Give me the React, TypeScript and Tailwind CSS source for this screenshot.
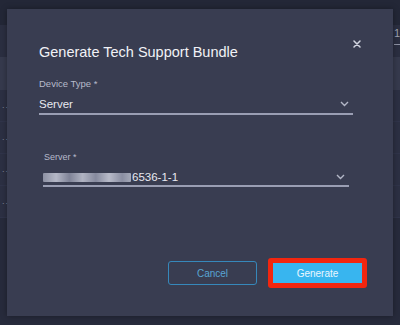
import React from "react";

const rows = [0, 1, 2, 3];

function Chevron() {
  return (
    <svg width="9" height="6" viewBox="0 0 9 6" className="shrink-0">
      <polyline points="1,1 4.5,4.5 8,1" fill="none" stroke="#b3b7c7" strokeWidth="1.4" />
    </svg>
  );
}

function CloseIcon() {
  return (
    <svg width="8" height="8" viewBox="0 0 8 8">
      <path d="M1 1 L7 7 M7 1 L1 7" stroke="#d2d5e0" strokeWidth="1.5" strokeLinecap="round" />
    </svg>
  );
}

export default function App() {
  return (
    <div
      className="relative w-[400px] h-[325px] overflow-hidden bg-[#262a3b]"
      style={{ fontFamily: '"Liberation Sans", Arial, sans-serif' }}
    >
      {/* page behind the dialog */}
      <div className="flex flex-col w-full h-full">
        <div className="h-[25px] bg-[#232737]" />
        <div className="h-[20px] bg-[#2b2f41] flex">
          <div className="ml-auto w-[20px] mr-[-14px] text-[11px] leading-[16px] text-[#9ea2b3] border-b border-[#8e92a4]">
            10
          </div>
        </div>
        <div className="h-[12px] bg-[#2b2f41]" />
        <div className="h-[33px] bg-[#363a4d]" />
        {rows.map((r) => (
          <div key={r} className="h-[32px] border-b border-[#30344a] bg-[#2c3043] flex items-center pl-[2px]">
            <span className="text-[9px] leading-none text-[#7f8396] tracking-[1px]">...</span>
          </div>
        ))}
        <div className="flex-1 bg-[#272b3c]" />
      </div>

      {/* dialog */}
      <div className="absolute left-[7px] top-[9px] w-[386px] h-[307px] bg-[#393d51] shadow-[0_0_6px_rgba(0,0,0,0.35)] flex flex-col pl-[32px] pr-[40px] pt-[34px]">
        <button className="absolute right-[31px] top-[30px] w-[10px] h-[10px] flex items-center justify-center">
          <CloseIcon />
        </button>

        <div className="text-[14.5px] leading-[18px] text-[#f1f2f6]">Generate Tech Support Bundle</div>

        <div className="mt-[17px] text-[9.5px] leading-[12px] text-[#b6bacb]">Device Type *</div>
        <div className="mt-[6px] flex items-center justify-between pb-[1px] pr-[4px] border-b-2 border-[#9a9eb3]">
          <span className="text-[11.5px] leading-[16px] text-[#e8e9f0]">Server</span>
          <Chevron />
        </div>

        <div className="mx-[4px] mt-[36px] flex flex-col">
          <div className="pl-[1px] text-[9px] leading-[12px] text-[#b6bacb]">Server *</div>
          <div className="mt-[6px] flex items-center justify-between pr-[4px] border-b-2 border-[#9a9eb3]">
            <span className="flex items-center text-[11.5px] leading-[16px] text-[#e8e9f0]">
              <span className="inline-block w-[88px] h-[9px] mr-[1px] rounded-[1px] bg-[linear-gradient(90deg,#8d91a3_0%,#b4b7c6_15%,#7f8397_30%,#b0b3c2_45%,#868a9e_60%,#b8bbc9_75%,#8a8ea2_90%,#a5a9b8_100%)] blur-[0.6px]" />
              6536-1-1
            </span>
            <Chevron />
          </div>
        </div>

        <div className="mt-[71px] mr-[-14px] flex items-center justify-end gap-[11px]">
          <div className="w-[89px] h-[24px] rounded-[3px] border-[1.5px] border-[#3688bb] flex items-center justify-center text-[10px] text-[#58a5d4]">
            Cancel
          </div>
          <div className="w-[99px] h-[30px] rounded-[3px] border-[5px] border-[#f2260f] bg-[#38b5ef] flex items-center justify-center text-[10px] text-[#eaf7ff]">
            Generate
          </div>
        </div>
      </div>
    </div>
  );
}
